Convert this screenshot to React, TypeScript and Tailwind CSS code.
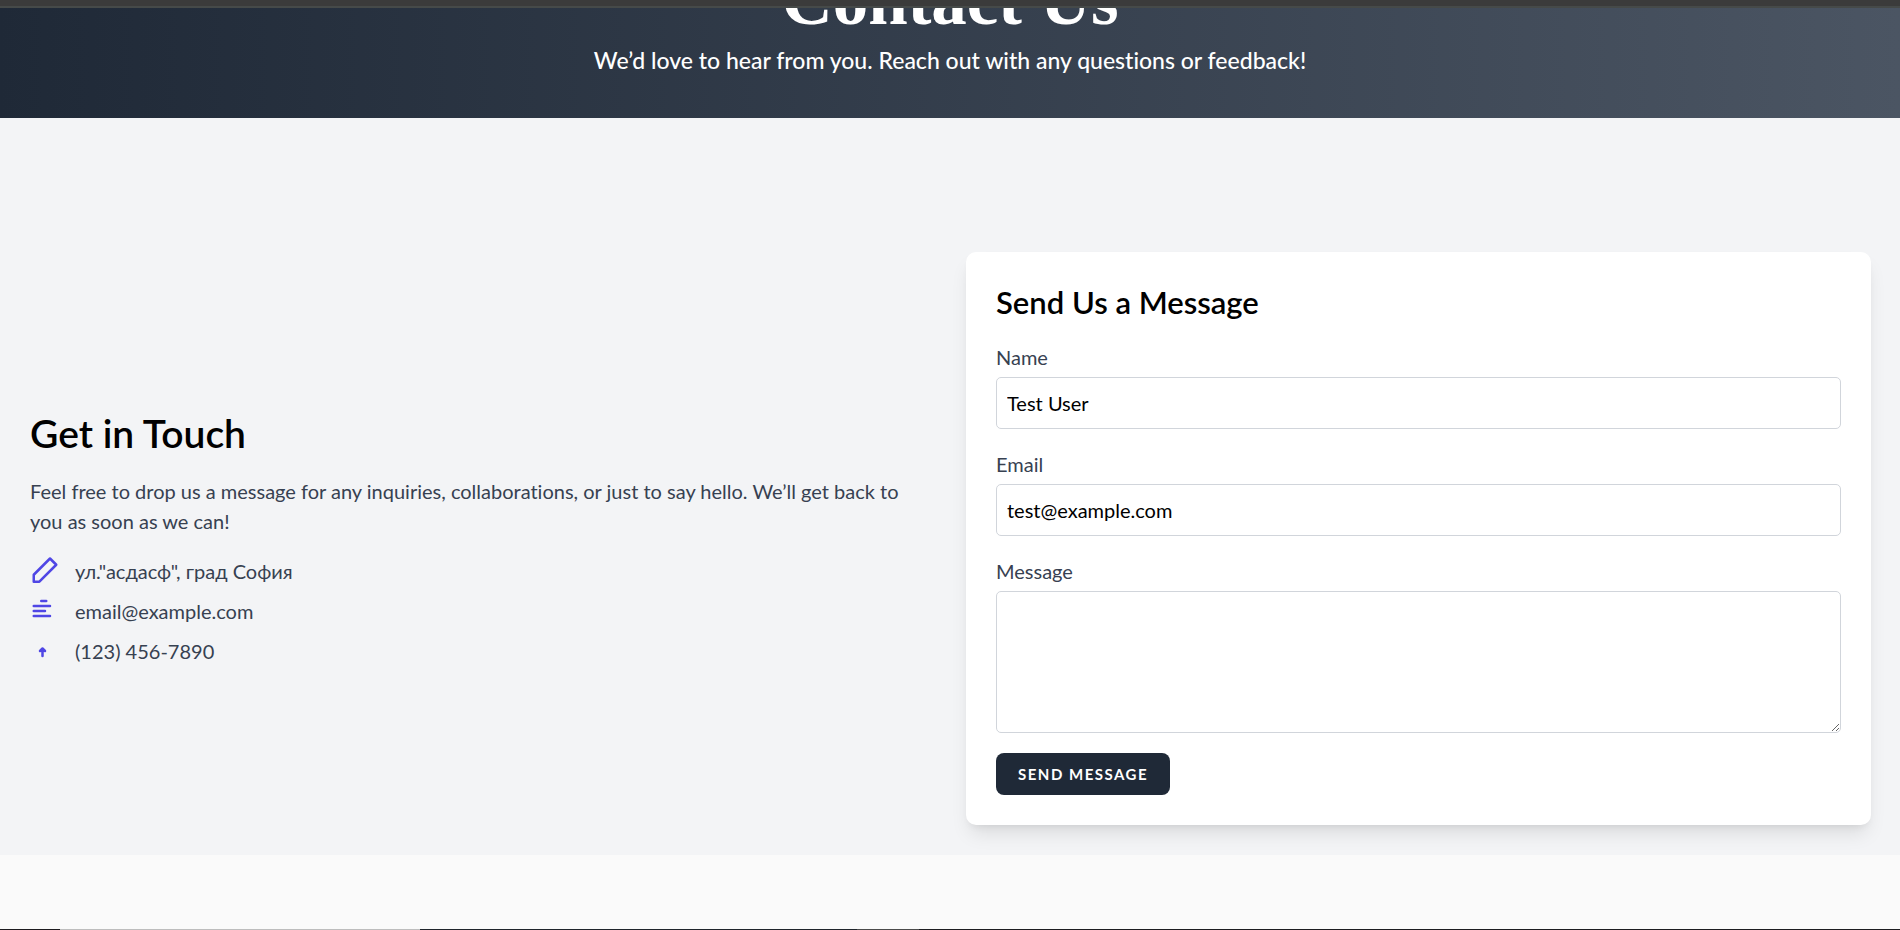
import React, { useState } from 'react';

const PencilIcon = () => (
  <path d="M16 2l5 5L7.5 20.5H3V15L16 2z" />
);

const LinesIcon = () => (
  <path d="M9 4h4M3 8h13M3 12h9M3 16h13" />
);

const ArrowIcon = () => (
  <path d="M8 12l2-2 2 2M10 10v6" />
);

const contacts = [
  { text: 'ул."асдасф", град София', Icon: PencilIcon },
  { text: 'email@example.com', Icon: LinesIcon },
  { text: '(123) 456-7890', Icon: ArrowIcon },
];

const fieldClass = 'mt-[5px] block w-full rounded-[5px] border border-[#d1d5db] bg-white p-[10px] leading-[30px] text-black';

const Hero: React.FC = () => (
  <header className="flex h-[110px] flex-col items-center justify-end overflow-hidden bg-linear-to-r from-[#1f2937] to-[#4b5563] pb-10 text-center text-white">
    <h1 className="mb-[6px] shrink-0 font-['Liberation_Serif',serif] text-[71px] leading-none font-bold">Contact Us</h1>
    <p className="shrink-0 text-[23px] leading-9 font-medium">We’d love to hear from you. Reach out with any questions or feedback!</p>
  </header>
);

const GetInTouch: React.FC = () => (
  <div>
    <h2 className="mb-5 text-[39px] leading-[45px] font-semibold text-black">Get in Touch</h2>
    <p className="mb-5 text-[#374151]">
      Feel free to drop us a message for any inquiries, collaborations, or just to say hello. We’ll get back to you as soon as we can!
    </p>
    <ul className="flex flex-col gap-[10px]">
      {contacts.map(({ text, Icon }) => (
        <li key={text} className="flex items-center gap-[15px] text-[#374151]">
          <svg className="size-[30px] text-[#4f46e5]" viewBox="0 0 24 24" fill="none" stroke="currentColor" strokeWidth="2" strokeLinecap="round" strokeLinejoin="round" aria-hidden="true">
            <Icon />
          </svg>
          <span>{text}</span>
        </li>
      ))}
    </ul>
  </div>
);

const ContactForm: React.FC = () => {
  const [name, setName] = useState('Test User');
  const [email, setEmail] = useState('test@example.com');
  const [message, setMessage] = useState('');

  return (
    <form className="rounded-[10px] bg-white p-[30px] shadow-[0_12px_19px_-4px_rgba(0,0,0,0.1),0_5px_8px_-5px_rgba(0,0,0,0.1)]" onSubmit={(e) => e.preventDefault()}>
      <h2 className="mb-5 text-[31px] leading-10 font-semibold text-black">Send Us a Message</h2>
      <div className="mb-5">
        <label htmlFor="name" className="block text-[#374151]">Name</label>
        <input id="name" type="text" className={fieldClass} value={name} onChange={(e) => setName(e.target.value)} />
      </div>
      <div className="mb-5">
        <label htmlFor="email" className="block text-[#374151]">Email</label>
        <input id="email" type="email" className={fieldClass} value={email} onChange={(e) => setEmail(e.target.value)} />
      </div>
      <div className="mb-5">
        <label htmlFor="message" className="block text-[#374151]">Message</label>
        <textarea id="message" rows={4} className={fieldClass} value={message} onChange={(e) => setMessage(e.target.value)} />
      </div>
      <button type="submit" className="block rounded-[8px] border border-transparent bg-[#1f2937] px-[21px] py-[10px] text-[15px] leading-5 font-bold tracking-widest text-white uppercase">
        Send Message
      </button>
    </form>
  );
};

export default function App() {
  return (
    <div className="flex h-screen flex-col overflow-hidden bg-[#fafafa] font-['Lato','Open_Sans',sans-serif] text-[20px] leading-[30px] [font-variant-ligatures:none]">
      <div className="h-2 shrink-0 border-b-2 border-[#464a49] bg-[#3b3b3b]" />
      <Hero />
      <main className="grid grid-cols-2 items-center gap-[31px] bg-[#f3f4f6] pt-[134px] pr-[29px] pb-[30px] pl-[30px]">
        <GetInTouch />
        <ContactForm />
      </main>
      <footer className="mt-auto flex h-px shrink-0">
        <div className="flex-[60] bg-[#1c1a1e]" />
        <div className="flex-[360] bg-[#bdbdbd]" />
        <div className="flex-[437] bg-[#1f242b]" />
        <div className="flex-[62] bg-[#4a4a4a]" />
        <div className="flex-[981] bg-[#1c1c20]" />
      </footer>
    </div>
  );
}
